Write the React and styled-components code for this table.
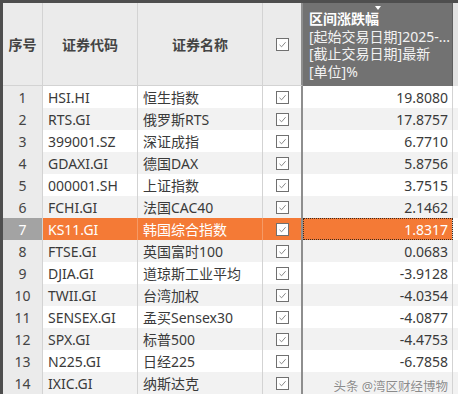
import React from "react";
import styled, { createGlobalStyle } from "styled-components";

const rows = [
  ["HSI.HI", "恒生指数", "19.8080"],
  ["RTS.GI", "俄罗斯RTS", "17.8757"],
  ["399001.SZ", "深证成指", "6.7710"],
  ["GDAXI.GI", "德国DAX", "5.8756"],
  ["000001.SH", "上证指数", "3.7515"],
  ["FCHI.GI", "法国CAC40", "2.1462"],
  ["KS11.GI", "韩国综合指数", "1.8317"],
  ["FTSE.GI", "英国富时100", "0.0683"],
  ["DJIA.GI", "道琼斯工业平均", "-3.9128"],
  ["TWII.GI", "台湾加权", "-4.0354"],
  ["SENSEX.GI", "孟买Sensex30", "-4.0877"],
  ["SPX.GI", "标普500", "-4.4753"],
  ["N225.GI", "日经225", "-6.7858"],
  ["IXIC.GI", "纳斯达克", ""],
];

const SELECTED = 6;

const Check = () => (
  <Box>
    <svg width="9" height="9" viewBox="0 0 9 9">
      <polyline points="1.5,4.8 3.6,6.8 7.6,2.2" fill="none" stroke="#7a7a7a" strokeWidth="0.9" />
    </svg>
  </Box>
);

const App = () => {
  return (
    <>
      <Global />
      <Sheet>
        <Grid>
          <HeadCell>序号</HeadCell>
          <HeadCell>证券代码</HeadCell>
          <HeadCell>证券名称</HeadCell>
          <HeadCell $check>
            <Check />
          </HeadCell>
          <ValueHead>
            <SortMark />
            <strong>区间涨跌幅</strong>
            <span>[起始交易日期]2025-...</span>
            <span>[截止交易日期]最新</span>
            <span>[单位]%</span>
          </ValueHead>
          <HeadTail />

          {rows.map((r, i) => {
            const sel = i === SELECTED;
            const alt = i % 2 === 1;
            return (
              <React.Fragment key={r[0]}>
                <SeqCell $sel={sel}>{i + 1}</SeqCell>
                <Cell $sel={sel} $alt={alt}>{r[0]}</Cell>
                <Cell $sel={sel} $alt={alt}>{r[1]}</Cell>
                <CheckCell $sel={sel} $alt={alt}>
                  <Check />
                </CheckCell>
                <ValueCell $sel={sel} $alt={alt}>{r[2]}</ValueCell>
                <Tail $alt={alt} />
              </React.Fragment>
            );
          })}
        </Grid>
        <Watermark>头条 @湾区财经博物</Watermark>
      </Sheet>
    </>
  );
};

export default App;

const Global = createGlobalStyle`
  html, body {
    margin: 0;
    padding: 0;
    background: #ffffff;
  }
  body {
    font-family: "Noto Sans", "Noto Sans CJK SC", sans-serif;
    font-size: 14px;
    color: #3a3a3a;
  }
`;

const Sheet = styled.div`
  position: relative;
  width: 458px;
  height: 399px;
  overflow: hidden;
  background: #fff;
`;

const Grid = styled.div`
  display: grid;
  grid-template-columns: 40px 95px 125px 40px 150px 5px;
  grid-template-rows: 83px repeat(14, 22px);
  border-top: 3px solid #4e4e4e;
  border-left: 3px solid #4e4e4e;
  width: 455px;
`;

const HeadCell = styled.div`
  box-sizing: border-box;
  display: flex;
  align-items: center;
  justify-content: center;
  background: #ebebeb;
  border-right: ${(p) => (p.$check ? "2px solid #8e8e8e" : "1px solid #d3d3d3")};
  border-bottom: 1px solid #d3d3d3;
  font-weight: 700;
  font-size: 14px;
  color: #444;
`;

const ValueHead = styled.div`
  position: relative;
  box-sizing: border-box;
  display: flex;
  flex-direction: column;
  padding: 7px 0 0 6px;
  background: #727272;
  color: #f2f2f2;
  font-size: 14px;
  line-height: 17.5px;
  white-space: nowrap;
  overflow: hidden;
  border-right: 1px solid #5e5e5e;

  strong {
    color: #fff;
    font-weight: 700;
  }
`;

const SortMark = styled.i`
  position: absolute;
  top: 3px;
  left: 72px;
  width: 0;
  height: 0;
  border-left: 3px solid transparent;
  border-right: 3px solid transparent;
  border-top: 4px solid #fff;
`;

const HeadTail = styled.div`
  background: #e2e2e2;
`;

const SeqCell = styled.div`
  box-sizing: border-box;
  display: flex;
  align-items: center;
  justify-content: center;
  background: ${(p) => (p.$sel ? "#a3a3a3" : "#ebebeb")};
  color: ${(p) => (p.$sel ? "#fff" : "#444")};
  border-right: 1px solid #d3d3d3;
`;

const Cell = styled.div`
  box-sizing: border-box;
  display: flex;
  align-items: center;
  padding-left: 5px;
  white-space: nowrap;
  overflow: hidden;
  background: ${(p) => (p.$sel ? "#f47a36" : p.$alt ? "#f2f2f2" : "#fff")};
  color: ${(p) => (p.$sel ? "#fff" : "#3a3a3a")};
  border-right: 1px solid ${(p) => (p.$sel ? "#f59a66" : "#d3d3d3")};
`;

const CheckCell = styled(Cell)`
  justify-content: center;
  padding-left: 0;
  border-right: 2px solid #8e8e8e;
`;

const ValueCell = styled(Cell)`
  justify-content: flex-end;
  padding: 0 4px 0 0;
  border-right: 1px solid #d3d3d3;
  outline: ${(p) => (p.$sel ? "1px dotted #3a2a20" : "none")};
  outline-offset: -1px;
`;

const Tail = styled.div`
  background: ${(p) => (p.$alt ? "#f2f2f2" : "#fff")};
`;

const Box = styled.span`
  box-sizing: border-box;
  display: flex;
  align-items: center;
  justify-content: center;
  width: 13px;
  height: 13px;
  border: 1px solid #707070;
  background: #fff;
`;

const Watermark = styled.div`
  position: absolute;
  right: 10px;
  top: 376px;
  font-size: 12.5px;
  color: #7a7a7a;
  opacity: 0.85;
  text-shadow: 0 0 2px #fff;
`;
